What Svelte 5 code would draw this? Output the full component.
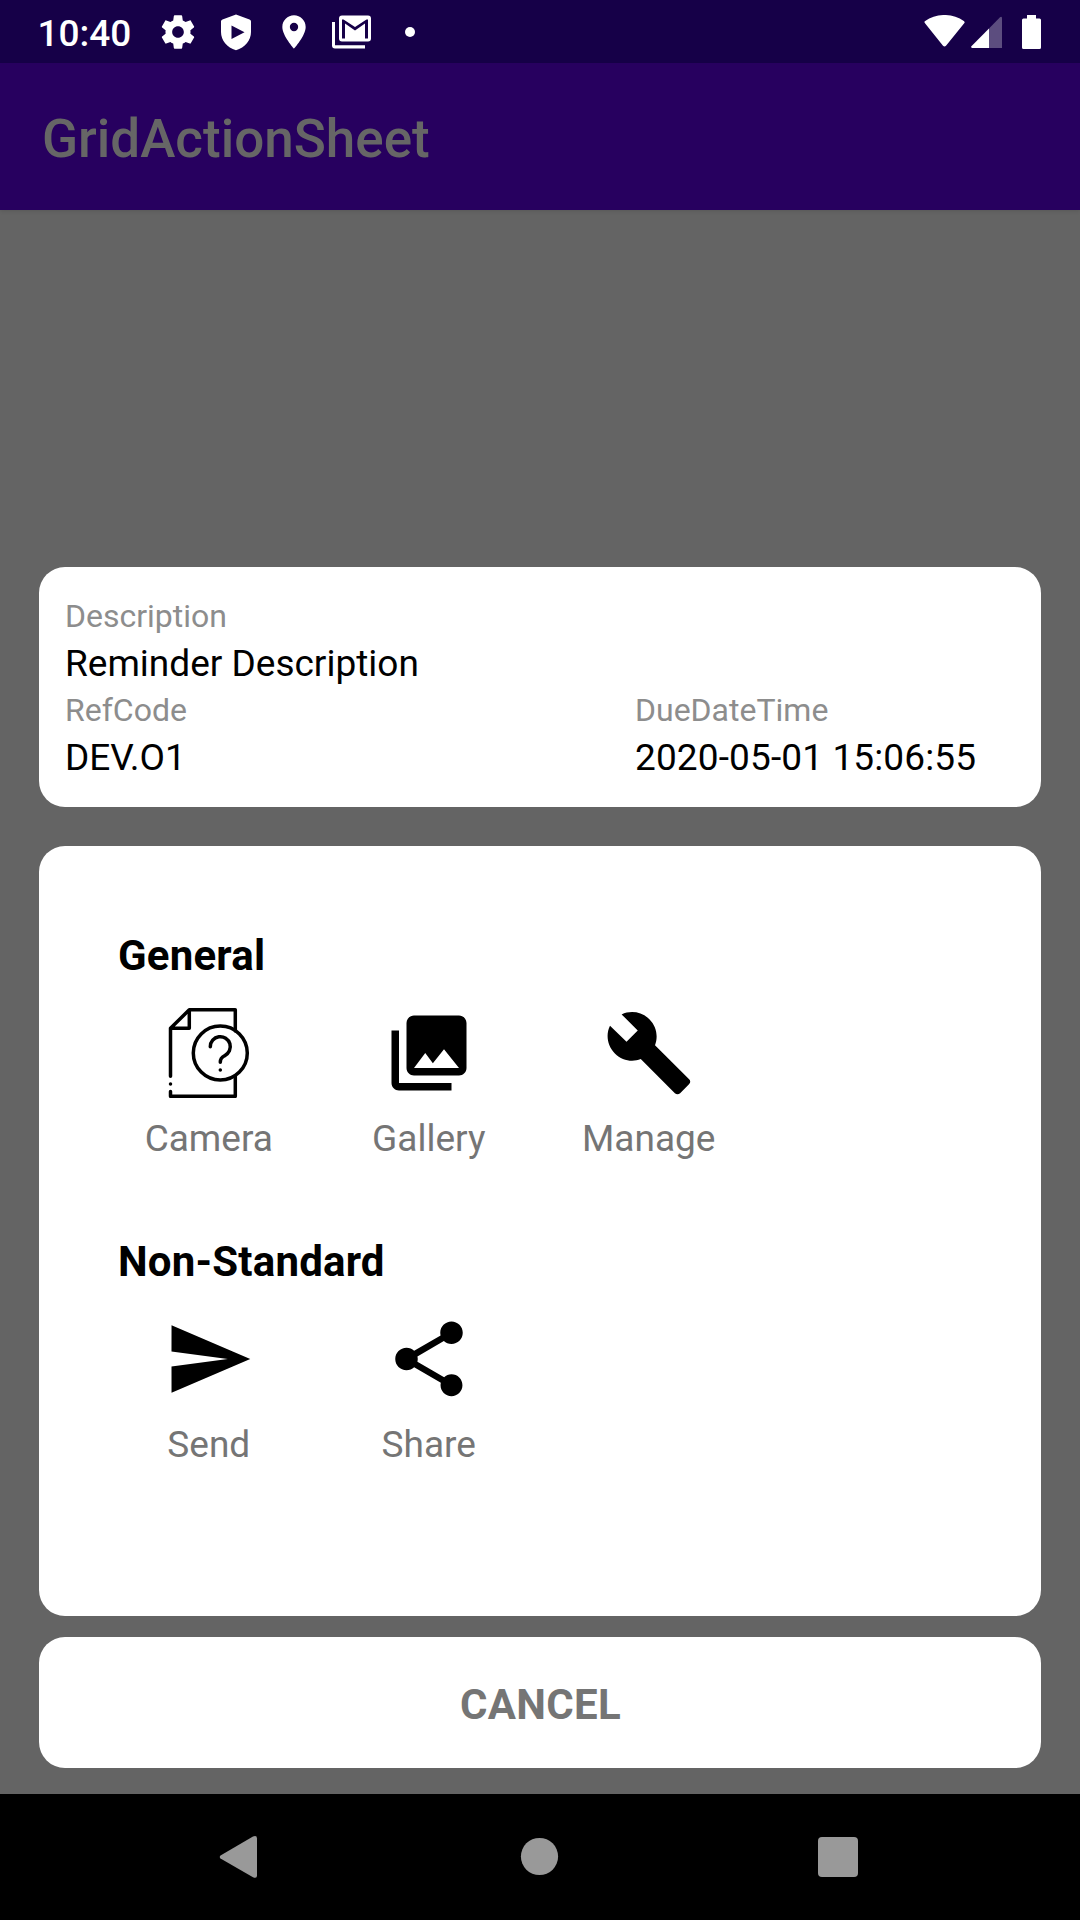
<script>
  const groups = [
    { title: 'General', items: ['Camera', 'Gallery', 'Manage'] },
    { title: 'Non-Standard', items: ['Send', 'Share'] }
  ];

  const paths = {
    Gallery:
      'M22 16V4c0-1.1-.9-2-2-2H8c-1.1 0-2 .9-2 2v12c0 1.1.9 2 2 2h12c1.1 0 2-.9 2-2zm-11-4l2.03 2.71L16 11l4 5H8l3-4zM2 6v14c0 1.1.9 2 2 2h14v-2H4V6H2z',
    Manage:
      'M22.7 19l-9.1-9.1c.9-2.3.4-5-1.5-6.9-2-2-5-2.4-7.4-1.3L9 6 6 9 1.6 4.7C.4 7.1.9 10.1 2.9 12.1c1.9 1.9 4.6 2.4 6.9 1.5l9.1 9.1c.4.4 1 .4 1.4 0l2.3-2.3c.5-.4.5-1.1.1-1.4z',
    Send: 'M2.01 21L23 12 2.01 3 2 10l15 2-15 2z',
    Share:
      'M18 16.08c-.76 0-1.44.3-1.96.77L8.91 12.7c.05-.23.09-.46.09-.7s-.04-.47-.09-.7l7.05-4.11c.54.5 1.25.81 2.04.81 1.66 0 3-1.34 3-3s-1.34-3-3-3-3 1.34-3 3c0 .24.04.47.09.7L8.04 9.81C7.5 9.31 6.79 9 6 9c-1.66 0-3 1.34-3 3s1.34 3 3 3c.79 0 1.5-.31 2.04-.81l7.12 4.16c-.05.21-.08.43-.08.65 0 1.61 1.31 2.92 2.92 2.92 1.61 0 2.92-1.31 2.92-2.92s-1.31-2.92-2.92-2.92z'
  };
</script>

<div class="screen">
  <header class="status">
    <span class="time">10:40</span>
    <div class="notes">
      <svg width="40" height="40" viewBox="0 0 24 24"><path d="M19.43 12.98c.04-.32.07-.64.07-.98s-.03-.66-.07-.98l2.11-1.65c.19-.15.24-.42.12-.64l-2-3.46c-.12-.22-.39-.3-.61-.22l-2.49 1c-.52-.4-1.08-.73-1.69-.98l-.38-2.65C14.46 2.18 14.25 2 14 2h-4c-.25 0-.46.18-.49.42l-.38 2.65c-.61.25-1.17.59-1.69.98l-2.49-1c-.23-.09-.49 0-.61.22l-2 3.46c-.13.22-.07.49.12.64l2.11 1.65c-.04.32-.07.65-.07.98s.03.66.07.98l-2.11 1.65c-.19.15-.24.42-.12.64l2 3.46c.12.22.39.3.61.22l2.49-1c.52.4 1.08.73 1.69.98l.38 2.65c.03.24.24.42.49.42h4c.25 0 .46-.18.49-.42l.38-2.65c.61-.25 1.17-.59 1.69-.98l2.49 1c.23.09.49 0 .61-.22l2-3.46c.12-.22.07-.49-.12-.64l-2.11-1.65zM12 15.5c-1.93 0-3.5-1.57-3.5-3.5s1.57-3.5 3.5-3.5 3.5 1.57 3.5 3.5-1.57 3.5-3.5 3.5z" /></svg>
      <svg width="40" height="40" viewBox="0 0 40 40"><path fill-rule="evenodd" d="M20 2.5L33.5 7.5Q35 8 35 9.5V20C35 28.500 29 35.500 20 38.300C11 35.500 5 28.500 5 20V9.500Q5 8 6.500 7.500ZM15.500 13.500V27L28.500 20.200Z" /></svg>
      <svg width="40" height="40" viewBox="0 0 24 24"><path d="M12 2C8.130 2 5 5.130 5 9c0 5.250 7 13 7 13s7-7.750 7-13c0-3.870-3.130-7-7-7zm0 9.500a2.500 2.500 0 0 1 0-5 2.500 2.500 0 0 1 0 5z" /></svg>
      <svg width="40" height="40" viewBox="0 0 40 40"><path fill-rule="evenodd" d="M10 3.500H36Q39 3.500 39 6.500V26.500Q39 29.500 36 29.500H10Q7 29.500 7 26.500V6.500Q7 3.500 10 3.500ZM10 7.500V26.500H13V11.500L23 18.500L33 11.500V26.500H36V7.500H34.500L23 15L11.500 7.500Z" /><path d="M0 10H3V33.200H33V36.500H3Q0 36.500 0 33.500Z" /></svg>
      <i class="more"></i>
    </div>
    <div class="system">
      <svg width="41" height="34" viewBox="0 0 41 34"><path d="M1 8.200Q-.3 7 1.200 5.900C12-2 29-2 39.800 5.900Q41.300 7 40.200 8.200L22 30.800Q20.500 32.400 19 30.800Z" /></svg>
      <svg class="signal" width="31" height="34" viewBox="0 0 31 34"><path opacity=".3" d="M18 13.600L29 2.300Q31 1 31 3.400V33H18Z" /><path d="M18 13.600V33H1.200Q-.6 32.500.4 31.200Z" /></svg>
      <svg width="19" height="34" viewBox="0 0 19 34"><path d="M5 0H14V3.500H17.500Q19 3.500 19 5V32.500Q19 34 17.500 34H1.500Q0 34 0 32.500V5Q0 3.500 1.500 3.500H5Z" /></svg>
    </div>
  </header>

  <div class="appbar">GridActionSheet</div>

  <main>
    <section class="card details">
      <div class="field wide"><span class="label">Description</span><span class="value">Reminder Description</span></div>
      <div class="field"><span class="label">RefCode</span><span class="value">DEV.O1</span></div>
      <div class="field"><span class="label">DueDateTime</span><span class="value date">2020-05-01 15:06:55</span></div>
    </section>

    <section class="card actions">
      {#each groups as group}
        <div class="group">
          <h2>{group.title}</h2>
          <div class="grid">
            {#each group.items as item}
              <div class="item">
                {#if item === 'Camera'}
                  <svg class="outline" width="90" height="90" viewBox="0 0 90 90">
                    <path d="M6.500 68.200V20.300L25.300 1.800H71.300V23M71.300 67.500V88.300H6.500V83.500M6.500 20.300H25.300V1.800M6.500 76h.01" />
                    <circle cx="56.300" cy="45" r="27" />
                    <path d="M46.300 38.800A10 10 0 1 1 60.500 47.800Q56.300 50 56.300 54.200M56.300 62h.01" />
                  </svg>
                {:else}
                  <svg width="90" height="90" viewBox="0 0 24 24"><path d={paths[item]} /></svg>
                {/if}
                <span>{item}</span>
              </div>
            {/each}
          </div>
        </div>
      {/each}
    </section>

    <button class="card cancel">CANCEL</button>
  </main>

  <nav>
    <svg width="40" height="44" viewBox="0 0 40 44"><path d="M1.500 20.500L34 1.500Q38 0 38 3.500V40.500Q38 44 34 42.300L1.500 23.500Q0 22 1.500 20.500Z" /></svg>
    <svg width="40" height="40" viewBox="0 0 40 40"><circle cx="20.500" cy="19.500" r="18.600" /></svg>
    <svg width="40" height="40" viewBox="0 0 40 40"><rect width="40" height="40" rx="4" /></svg>
  </nav>
</div>

<style>
  :global(body) { margin: 0; }
  .screen {
    width: 1080px;
    height: 1920px;
    display: flex;
    flex-direction: column;
    background: #646464;
    font-family: Roboto, sans-serif;
    overflow: hidden;
  }
  svg { display: block; flex: none; }
  .status {
    height: 63px;
    flex: none;
    box-sizing: border-box;
    padding: 0 39px 0 37.500px;
    display: flex;
    align-items: center;
    background: #160048;
    color: #fff;
    fill: #fff;
  }
  .time { width: 120.500px; font-size: 37px; font-weight: 500; line-height: 62px; padding-top: 5px; }
  .notes { display: flex; align-items: center; gap: 18px; }
  .more { width: 10px; height: 10px; border-radius: 50%; background: #fff; margin-left: 15px; }
  .system { display: flex; align-items: center; margin-left: auto; }
  .signal { margin: 0 20px 0 6px; }
  .appbar {
    height: 147px;
    flex: none;
    padding-left: 42px;
    background: #27005f;
    color: #666;
    font-size: 53px;
    font-weight: 500;
    line-height: 152px;
    box-shadow: 0 1px 4px rgba(0, 0, 0, .12);
  }
  main { flex: 1; display: flex; flex-direction: column; justify-content: flex-end; padding: 0 39px 26px; }
  .card { background: #fff; border-radius: 26px; box-sizing: border-box; }
  .details {
    height: 240px;
    padding: 28px 26px 0;
    display: grid;
    grid-template-columns: 3fr 2fr;
    align-content: start;
    margin-bottom: 39px;
  }
  .field { display: flex; flex-direction: column; white-space: nowrap; }
  .wide { grid-column: 1 / -1; }
  .label { font-size: 32px; line-height: 42px; padding-bottom: 2px; color: #8d8d8d; }
  .value { font-size: 37px; line-height: 50px; color: #000; }
  .date { letter-spacing: .13px; }
  .actions { height: 770px; padding: 80px 60px 0; margin-bottom: 21px; }
  .group { height: 306px; }
  h2 { margin: 0 0 0 19px; font-size: 42px; font-weight: 700; line-height: 60px; letter-spacing: .2px; color: #000; }
  .grid { display: grid; grid-template-columns: repeat(4, 220px); padding-top: 21.5px; }
  .item { display: flex; flex-direction: column; align-items: center; }
  .item span { margin: 16px .5px 0 0; font-size: 37px; line-height: 50px; color: #757575; }
  .outline { fill: none; stroke: #000; stroke-width: 3.5; stroke-linecap: round; stroke-linejoin: round; }
  .cancel {
    height: 131px;
    border: 0;
    padding: 4px 0 0 1px;
    font: 700 42px Roboto, sans-serif;
    letter-spacing: .3px;
    color: #757575;
  }
  nav {
    height: 126px;
    flex: none;
    box-sizing: border-box;
    padding: 0 222px 0 219px;
    display: flex;
    align-items: center;
    justify-content: space-between;
    background: #000;
    fill: #999;
  }
</style>
